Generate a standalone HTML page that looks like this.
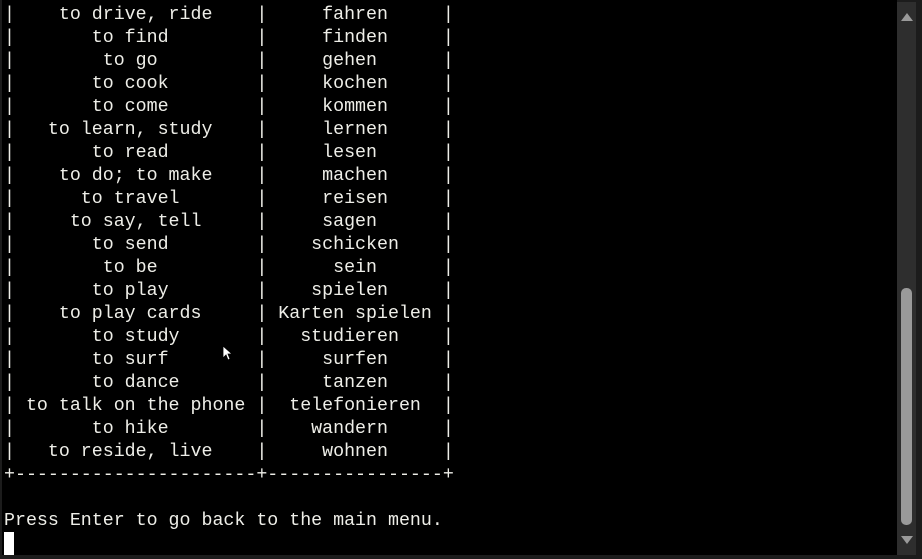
<!DOCTYPE html>
<html><head><meta charset="utf-8"><style>
html,body{margin:0;padding:0;background:#1c1c1c;width:922px;height:559px;overflow:hidden}
#term{position:absolute;left:2px;top:0;width:895px;height:555px;background:#000}
pre{position:absolute;left:4px;top:4px;margin:0;font-family:"Liberation Mono",monospace;font-size:18.3px;line-height:23px;color:#eeeee8;white-space:pre}
#cur{position:absolute;left:4px;top:532px;width:10px;height:23px;background:#fff}
#track{position:absolute;left:897px;top:2px;width:19px;height:553px;background:#2e2e2e}
#thumb{position:absolute;left:901px;top:288px;width:11px;height:237px;background:#9a9a9a;border-radius:5px}
.ar{position:absolute;left:901px;width:0;height:0;border-left:6px solid transparent;border-right:6px solid transparent}
</style></head><body>
<div id="term"></div>
<pre>|    to drive, ride    |     fahren     |
|       to find        |     finden     |
|        to go         |     gehen      |
|       to cook        |     kochen     |
|       to come        |     kommen     |
|   to learn, study    |     lernen     |
|       to read        |     lesen      |
|    to do; to make    |     machen     |
|      to travel       |     reisen     |
|     to say, tell     |     sagen      |
|       to send        |    schicken    |
|        to be         |      sein      |
|       to play        |    spielen     |
|    to play cards     | Karten spielen |
|       to study       |   studieren    |
|       to surf        |     surfen     |
|       to dance       |     tanzen     |
| to talk on the phone |  telefonieren  |
|       to hike        |    wandern     |
|   to reside, live    |     wohnen     |
+----------------------+----------------+

Press Enter to go back to the main menu.</pre>
<div id="cur"></div>
<div id="track"></div>
<div id="thumb"></div>
<div class="ar" style="top:13px;border-bottom:8px solid #9a9a9a"></div>
<div class="ar" style="top:536px;border-top:8px solid #9a9a9a"></div>
<svg style="position:absolute;left:222px;top:345px" width="12" height="18" viewBox="0 0 12 18"><path d="M1 1 L1 13 L4 10 L6 15 L8 14 L6 9 L10 9 Z" fill="#fff" stroke="#000" stroke-width="0.8"/></svg>
</body></html>
